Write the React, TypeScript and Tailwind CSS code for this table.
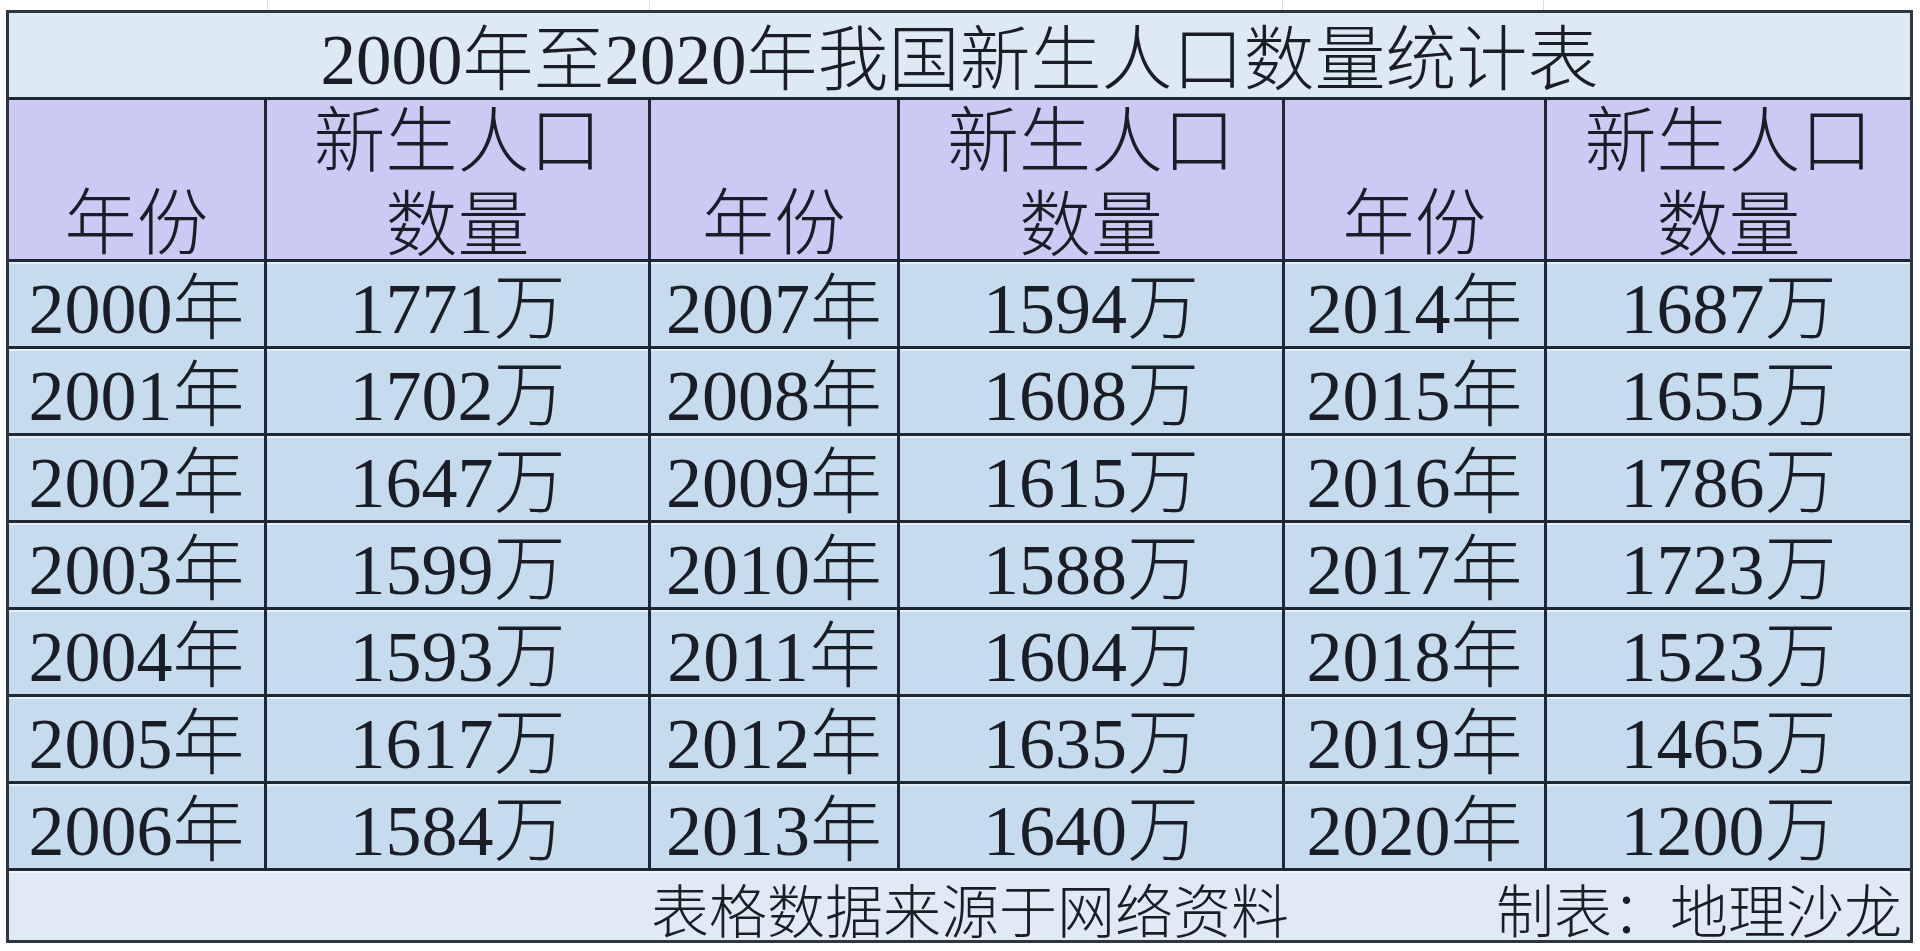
import React from 'react'

// 2000–2020 births table, three year/value column pairs side by side
const ROWS: [string, string][][] = [
  [['2000', '1771'], ['2007', '1594'], ['2014', '1687']],
  [['2001', '1702'], ['2008', '1608'], ['2015', '1655']],
  [['2002', '1647'], ['2009', '1615'], ['2016', '1786']],
  [['2003', '1599'], ['2010', '1588'], ['2017', '1723']],
  [['2004', '1593'], ['2011', '1604'], ['2018', '1523']],
  [['2005', '1617'], ['2012', '1635'], ['2019', '1465']],
  [['2006', '1584'], ['2013', '1640'], ['2020', '1200']],
]

const COLS = 'grid grid-cols-[258px_384px_249px_385px_262px_1fr]'
const LINE = 'border-[#1e2835]'

export default function App() {
  return (
    <div className="min-h-screen bg-white font-['Liberation_Serif','Noto_Sans_CJK_SC',serif] font-light text-[#1a1d26]">
      {/* faint sheet gridlines above the table */}
      <div className="flex h-[10px]">
        <div className="w-[268px] border-r border-[#dedede]" />
        <div className="w-[382px] border-r border-[#dedede]" />
        <div className="w-[633px] border-r border-[#dedede]" />
        <div className="w-[261px] border-r border-[#dedede]" />
      </div>

      <div className="ml-[6px] w-[1907px] border-[3px] border-[#2e3642]">
        {/* title */}
        <div className={`flex h-[87px] justify-center border-b-[3px] ${LINE} bg-[#dde9f3] pt-[12px] text-[71px] leading-none whitespace-nowrap`}>
          2000年至2020年我国新生人口数量统计表
        </div>

        {/* header */}
        <div className={`${COLS} h-[162px] border-b-[3px] ${LINE} bg-[#cdc9f5] text-[72px] leading-[84px]`}>
          {[0, 1, 2].map(g => (
            <React.Fragment key={g}>
              <div className={`flex justify-center border-r-[3px] ${LINE} pt-[82px]`}>年份</div>
              <div
                className={`flex flex-col items-center whitespace-nowrap ${
                  g < 2 ? `border-r-[3px] ${LINE}` : ''
                }`}
              >
                <span>新生人口</span>
                <span>数量</span>
              </div>
            </React.Fragment>
          ))}
        </div>

        {/* data */}
        {ROWS.map((row, r) => (
          <div
            key={r}
            className={`${COLS} h-[87px] border-b-[3px] ${LINE} bg-[#c7dbee] text-[72px] leading-none shadow-[inset_0_2px_0_rgba(255,255,255,0.55)]`}
          >
            {row.map(([year, num], g) => (
              <React.Fragment key={year}>
                <div className={`flex justify-center whitespace-nowrap border-r-[3px] ${LINE} pt-[11px]`}>{year}年</div>
                <div
                  className={`flex justify-center whitespace-nowrap pt-[11px] ${
                    g < 2 ? `border-r-[3px] ${LINE}` : ''
                  }`}
                >
                  {num}万
                </div>
              </React.Fragment>
            ))}
          </div>
        ))}

        {/* footer */}
        <div className={`${COLS} h-[69px] bg-[#dfeaf4] shadow-[inset_0_2px_0_rgba(255,255,255,0.6)]`}>
          <div className="col-span-2 col-start-3 flex whitespace-nowrap pt-[14px] text-[58px] leading-none">
            表格数据来源于网络资料
          </div>
          <div className="col-span-2 flex justify-end whitespace-nowrap pr-[8px] pt-[14px] text-[58px] leading-none">
            制表：地理沙龙
          </div>
        </div>
      </div>
    </div>
  )
}
